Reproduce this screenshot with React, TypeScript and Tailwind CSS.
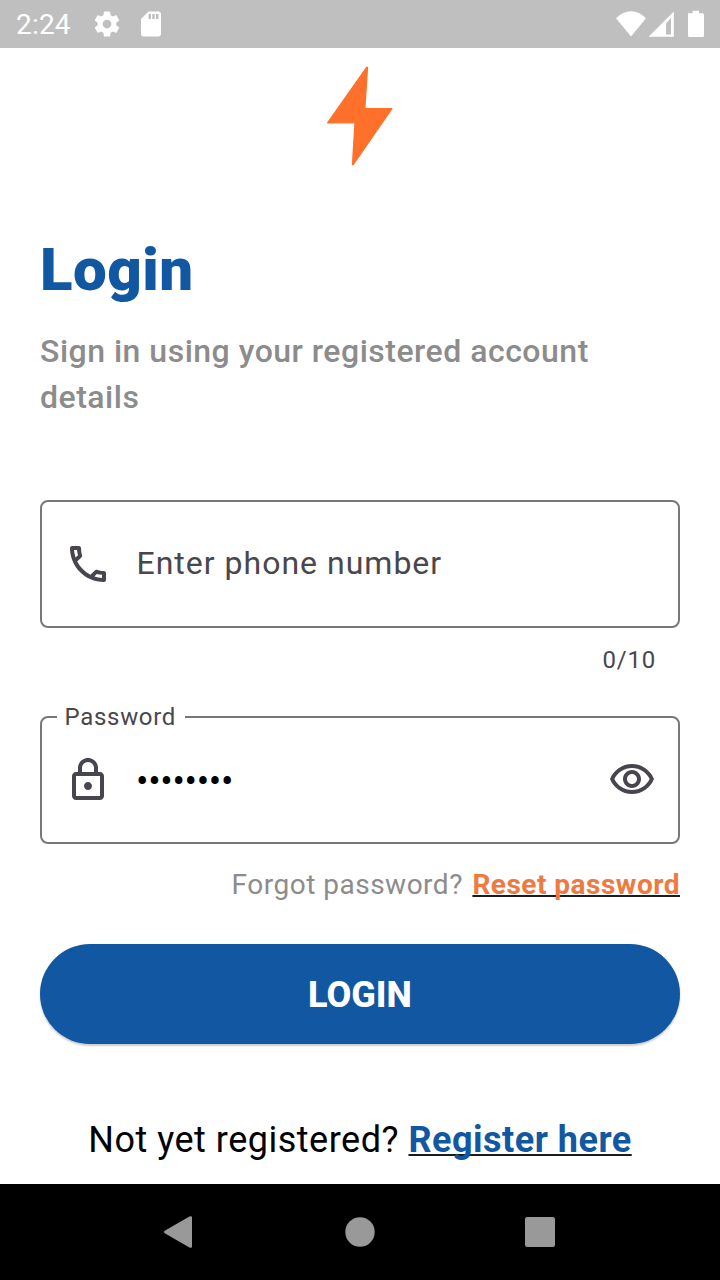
function StatusBar() {
  return (
    <header className="flex h-12 shrink-0 items-center justify-between bg-[#bfbfbf] pl-4 pr-3 text-white">
      <div className="flex items-center">
        <span className="w-[76px] pt-[2px] text-[28px] leading-[50px] tracking-[0.2px]">2:24</span>
        <svg className="size-[30px]" viewBox="0 0 24 24" fill="currentColor">
          <path d="M19.43 12.98c.04-.32.07-.64.07-.98s-.03-.66-.07-.98l2.11-1.65c.19-.15.24-.42.12-.64l-2-3.46c-.12-.22-.39-.3-.61-.22l-2.49 1c-.52-.4-1.08-.73-1.69-.98l-.38-2.65C14.46 2.18 14.25 2 14 2h-4c-.25 0-.46.18-.49.42l-.38 2.65c-.61.25-1.17.59-1.69.98l-2.49-1c-.23-.09-.49 0-.61.22l-2 3.46c-.13.22-.07.49.12.64l2.11 1.65c-.04.32-.07.65-.07.98s.03.66.07.98l-2.11 1.65c-.19.15-.24.42-.12.64l2 3.46c.12.22.39.3.61.22l2.49-1c.52.4 1.08.73 1.69.98l.38 2.65c.03.24.24.42.49.42h4c.25 0 .46-.18.49-.42l.38-2.65c.61-.25 1.17-.59 1.69-.98l2.49 1c.23.09.49 0 .61-.22l2-3.46c.12-.22.07-.49-.12-.64l-2.11-1.65zM12 15.5c-1.93 0-3.5-1.57-3.5-3.5s1.57-3.5 3.5-3.5 3.5 1.57 3.5 3.5-1.57 3.5-3.5 3.5z" />
        </svg>
        <svg className="ml-[14px] size-[30px]" viewBox="0 0 24 24" fill="currentColor">
          <path d="M18 2h-8L4.02 8 4 20c0 1.1.9 2 2 2h12c1.1 0 2-.9 2-2V4c0-1.100-.9-2-2-2zm-6 6h-2V4h2v4zm3 0h-2V4h2v4zm3 0h-2V4h2v4z" />
        </svg>
      </div>
      <svg className="h-12 w-[96px]" viewBox="0 0 96 48" fill="currentColor">
        <path d="M4 18.300Q11 11.300 19 11.300T34 18.300L19 36.500Z" />
        <path fillRule="evenodd" d="M36.500 36.800 61.800 11.500V36.800ZM54 34.600H59V18L54 23.500Z" />
        <path d="M76 13.200h4.500v-2.400h6.500v2.400H90.500a1.500 1.500 0 0 1 1.500 1.500V35.500a1.500 1.500 0 0 1-1.500 1.500H77.500a1.500 1.500 0 0 1-1.500-1.500V13.200Z" />
      </svg>
    </header>
  );
}

function Logo() {
  return (
    <svg className="mx-auto h-[100px] w-[68px] shrink-0" viewBox="326 66 68 100">
      <path d="M366.500 67.500 327.600 122.800H355L352.500 164.500H353.300L391.900 108.700H364.800L367.500 67.500Z" fill="#ff702b" stroke="#ff702b" strokeWidth="1.300" strokeLinejoin="round" />
    </svg>
  );
}

function PhoneField() {
  return (
    <div className="flex h-32 items-center rounded-lg border-2 border-[#79777b] pl-[22px] text-[#49454f]">
      <svg className="size-12" viewBox="0 0 24 24" fill="currentColor">
        <path d="M20 15.5c-1.200 0-2.500-.2-3.600-.6h-.3c-.3 0-.5.1-.7.3l-2.200 2.200c-2.800-1.500-5.200-3.800-6.600-6.600l2.200-2.200c.3-.3.4-.7.2-1-.3-1.100-.5-2.400-.5-3.600 0-.5-.4-1-1-1H4c-.5 0-1 .5-1 1 0 9.400 7.600 17 17 17 .5 0 1-.5 1-1v-3.500c0-.5-.5-1-1-1M5 5h1.500c.1.9.3 1.800.5 2.600L5.800 8.800C5.400 7.600 5.100 6.300 5 5m14 14c-1.300-.1-2.600-.4-3.800-.8l1.200-1.200c.8.2 1.700.4 2.600.4V19z" />
      </svg>
      <span className="ml-[24.500px] pb-[2px] text-[32px] leading-[48px] tracking-[1px] text-[#49474c]">Enter phone number</span>
    </div>
  );
}

function PasswordField() {
  return (
    <div className="relative flex h-32 items-center rounded-lg border-2 border-[#79777b] pl-[22px] pr-[22px] text-[#49454f]">
      <span className="absolute -top-[15px] left-[15px] bg-white pl-[7.500px] pr-[9px] text-2xl leading-7 tracking-[0.700px] text-[#49474c]">Password</span>
      <svg className="size-12" viewBox="0 0 24 24" fill="currentColor">
        <path d="M18 8h-1V6c0-2.760-2.240-5-5-5S7 3.240 7 6v2H6c-1.100 0-2 .9-2 2v10c0 1.100.9 2 2 2h12c1.100 0 2-.9 2-2V10c0-1.100-.9-2-2-2zM9 6c0-1.660 1.340-3 3-3s3 1.340 3 3v2H9V6zm9 14H6V10h12v10zm-6-3c1.100 0 2-.9 2-2s-.9-2-2-2-2 .9-2 2 .9 2 2 2z" />
      </svg>
      <span className="ml-6 grow pt-[3px] text-[37px] leading-[48px] tracking-[-0.350px] text-black">••••••••</span>
      <svg className="size-12" viewBox="0 0 24 24" fill="currentColor">
        <path d="M12 6c3.790 0 7.170 2.130 8.820 5.500C19.170 14.870 15.790 17 12 17s-7.170-2.130-8.820-5.500C4.830 8.130 8.210 6 12 6m0-2C7 4 2.730 7.110 1 11.500 2.730 15.890 7 19 12 19s9.270-3.110 11-7.500C21.270 7.110 17 4 12 4zm0 5c1.380 0 2.500 1.120 2.500 2.500S13.380 14 12 14s-2.500-1.120-2.500-2.500S10.620 9 12 9m0-2c-2.480 0-4.500 2.020-4.500 4.500S9.520 16 12 16s4.500-2.020 4.500-4.500S14.480 7 12 7z" />
      </svg>
    </div>
  );
}

function NavigationBar() {
  return (
    <nav className="flex h-24 shrink-0 items-center justify-center gap-[132px] bg-black">
      <svg className="size-12" viewBox="0 0 48 48" fill="#999999">
        <path d="M8.700 22.800Q7 24 8.700 25.200L33.500 39.500Q36 40.500 36 38.500V9.500Q36 7.500 33.500 8.500Z" />
      </svg>
      <svg className="size-12" viewBox="0 0 48 48">
        <circle cx="24" cy="24" r="14.700" fill="#999999" />
      </svg>
      <svg className="size-12" viewBox="0 0 48 48">
        <rect x="9" y="9" width="30" height="30" rx="2.500" fill="#999999" />
      </svg>
    </nav>
  );
}

export default function App() {
  return (
    <div className="flex h-[1280px] w-[720px] flex-col overflow-hidden bg-white font-['Roboto',sans-serif] whitespace-nowrap">
      <StatusBar />
      <main className="flex grow flex-col px-10 pt-[18px]">
        <Logo />
        <h1 className="mt-[64px] text-[60px] leading-[80px] font-black tracking-[0.500px] text-[#1157a1]">Login</h1>
        <p className="mt-[18px] text-[32px] leading-[46px] font-medium tracking-[0.500px] text-[#8c8c8c]">
          Sign in using your registered account
          <br />
          details
        </p>
        <div className="mt-[80px]">
          <PhoneField />
        </div>
        <div className="mt-4 mb-[40px] self-end pr-6 text-2xl leading-8 tracking-[0.8px] text-[#49474c]">0/10</div>
        <PasswordField />
        <div className="mt-[21px] flex justify-end text-[28px] leading-[40px] tracking-[0.500px]">
          <span className="text-[#8c8c8c]">Forgot password?</span>
          <a className="ml-[9.500px] font-bold text-[#ee7a42] underline decoration-[#1c1b1f] decoration-[1.500px] underline-offset-1 [text-decoration-skip-ink:none]">Reset password</a>
        </div>
        <button className="mt-[39px] h-[100px] shrink-0 rounded-full bg-[#1157a1] pt-[2px] text-[36px] font-extrabold text-white shadow-[0_2px_2px_rgba(0,0,0,0.2)]">LOGIN</button>
        <div className="mt-[71px] flex justify-center text-[36px] leading-[50px] tracking-[0.500px]">
          <span className="text-black">Not yet registered?</span>
          <a className="ml-[9.500px] font-bold text-[#1157a1] underline decoration-[#1c1b1f] decoration-2 underline-offset-2 [text-decoration-skip-ink:none]">Register here</a>
        </div>
      </main>
      <NavigationBar />
    </div>
  );
}
